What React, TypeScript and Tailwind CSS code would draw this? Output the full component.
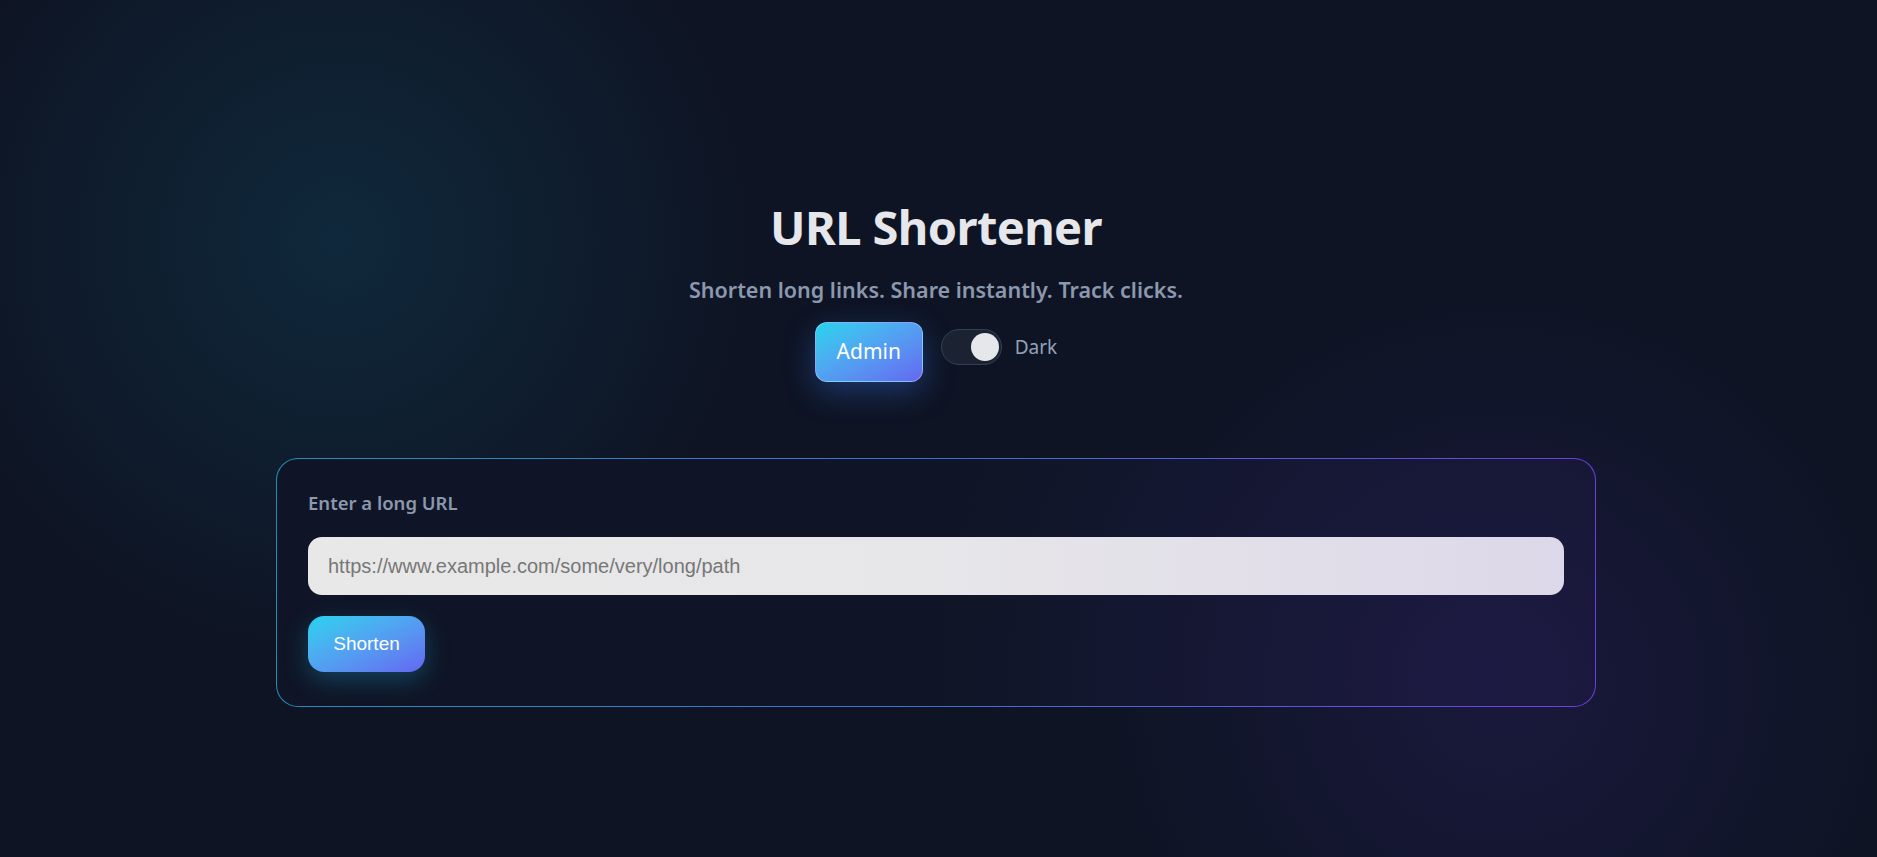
import React, { useState } from 'react';

const App: React.FC = () => {
  const [dark, setDark] = useState(true);
  const [url, setUrl] = useState('');

  return (
    <div className="min-h-screen w-full bg-[#0e1424] bg-[radial-gradient(circle_at_18%_28%,rgba(16,54,74,0.6),transparent_25%),radial-gradient(circle_at_80%_80%,rgba(40,30,90,0.45),transparent_24%)] font-['Noto_Sans','Open_Sans',sans-serif] text-slate-200">
      <div className="flex flex-col items-center pt-[203px] pr-[5px]">
        {/* Header */}
        <h1 className="text-[47px] leading-[48px] font-bold text-[#e5e7eb] tracking-[-0.6px]">
          URL Shortener
        </h1>
        <p className="mt-[24px] text-[21.5px] leading-[30px] font-semibold text-[#8b98ad]">
          Shorten long links. Share instantly. Track clicks.
        </p>

        <div className="mt-[17px] flex items-start gap-[18px]">
          <a
            href="#admin"
            className="flex h-[60px] w-[108px] items-center justify-center rounded-[12px] border border-white/30 bg-gradient-to-br from-[#22d3ee] to-[#6366f1] text-[21px] text-white shadow-[0_10px_30px_rgba(56,120,240,0.35)]"
          >
            Admin
          </a>
          <div className="mt-[7px] flex items-center gap-[13px]">
            <button
              onClick={() => setDark(!dark)}
              aria-label="Toggle theme"
              className="flex h-[36px] w-[61px] items-center rounded-full border border-[#334155] bg-[#1b2231] px-[3px]"
            >
              <span
                className={`h-[28px] w-[28px] rounded-full bg-[#e5e7eb] transition-transform ${
                  dark ? 'translate-x-[26px]' : 'translate-x-0'
                }`}
              />
            </button>
            <span className="text-[19px] text-[#94a3b8]">Dark</span>
          </div>
        </div>

        {/* Card */}
        <div className="mt-[76px] w-[1320px] rounded-[22px] bg-gradient-to-r from-[#1f8fb5] via-[#3f6fd6] to-[#6a3fe0] p-px">
          <div className="rounded-[21px] bg-[#0f1526] bg-[radial-gradient(circle_at_92%_90%,rgba(40,30,90,0.55),transparent_45%)] px-[31px] pt-[31px] pb-[34px]">
            <label className="block text-[18.5px] leading-[26px] font-semibold text-[#8b98ad]">
              Enter a long URL
            </label>
            <input
              value={url}
              onChange={(e) => setUrl(e.target.value)}
              placeholder="https://www.example.com/some/very/long/path"
              className="mt-[21px] h-[58px] w-full rounded-[14px] bg-gradient-to-r from-[#e8e8e8] via-[#e7e6e9] to-[#ddd8e9] px-5 font-['Liberation_Sans',Arial,sans-serif] text-[20px] text-gray-800 outline-none placeholder:text-[#777777]"
            />
            <button className="mt-[21px] h-[56px] w-[117px] rounded-[16px] bg-gradient-to-br from-[#22d3ee] to-[#6366f1] font-['Liberation_Sans',Arial,sans-serif] text-[19px] text-white shadow-[0_8px_24px_rgba(34,180,238,0.28)]">
              Shorten
            </button>
          </div>
        </div>
      </div>
    </div>
  );
};

export default App;
